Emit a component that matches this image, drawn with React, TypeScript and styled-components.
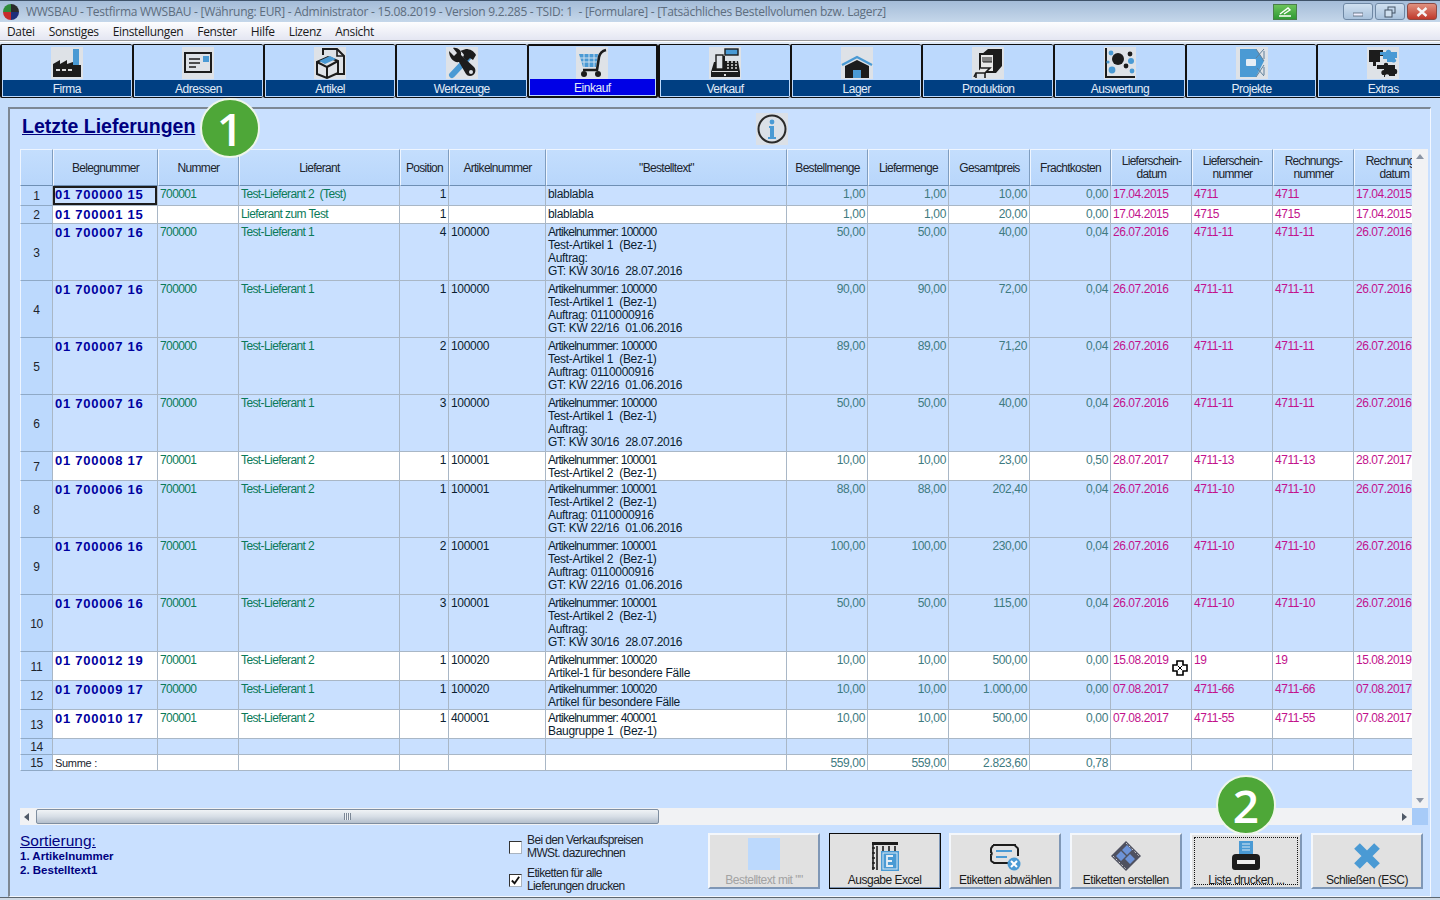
import React from "react";
import styled, { createGlobalStyle } from "styled-components";

const GlobalStyle = createGlobalStyle`
  html, body { margin: 0; padding: 0; background: #c5ddfb; }
  body { font-family: "Liberation Sans", Arial, sans-serif; }
`;

/* ---------- data ---------- */

interface Row {
  beleg: string;
  nummer: string;
  lieferant: string;
  position: string;
  artikel: string;
  text: string[];
  menge: string;
  liefer: string;
  preis: string;
  fracht: string;
  datum: string;
  schein: string;
  rechnung: string;
  rdatum: string;
  height: number;
  white?: boolean;
}

const TL1 = "Test-Lieferant 1";
const TL2 = "Test-Lieferant 2";
const art = (n: string, name: string, auftrag: string, gt: string) => [
  `Artikelnummer: ${n}`,
  name,
  `Auftrag:${auftrag ? " " + auftrag : ""}`,
  `GT: KW ${gt}`,
];

const ROWS: Row[] = [
  { beleg: "01 700000 15", nummer: "700001", lieferant: "Test-Lieferant 2  (Test)", position: "1", artikel: "", text: ["blablabla"], menge: "1,00", liefer: "1,00", preis: "10,00", fracht: "0,00", datum: "17.04.2015", schein: "4711", rechnung: "4711", rdatum: "17.04.2015", height: 20 },
  { beleg: "01 700001 15", nummer: "", lieferant: "Lieferant zum Test", position: "1", artikel: "", text: ["blablabla"], menge: "1,00", liefer: "1,00", preis: "20,00", fracht: "0,00", datum: "17.04.2015", schein: "4715", rechnung: "4715", rdatum: "17.04.2015", height: 18, white: true },
  { beleg: "01 700007 16", nummer: "700000", lieferant: TL1, position: "4", artikel: "100000", text: art("100000", "Test-Artikel 1  (Bez-1)", "", "30/16  28.07.2016"), menge: "50,00", liefer: "50,00", preis: "40,00", fracht: "0,04", datum: "26.07.2016", schein: "4711-11", rechnung: "4711-11", rdatum: "26.07.2016", height: 57 },
  { beleg: "01 700007 16", nummer: "700000", lieferant: TL1, position: "1", artikel: "100000", text: art("100000", "Test-Artikel 1  (Bez-1)", "0110000916", "22/16  01.06.2016"), menge: "90,00", liefer: "90,00", preis: "72,00", fracht: "0,04", datum: "26.07.2016", schein: "4711-11", rechnung: "4711-11", rdatum: "26.07.2016", height: 57 },
  { beleg: "01 700007 16", nummer: "700000", lieferant: TL1, position: "2", artikel: "100000", text: art("100000", "Test-Artikel 1  (Bez-1)", "0110000916", "22/16  01.06.2016"), menge: "89,00", liefer: "89,00", preis: "71,20", fracht: "0,04", datum: "26.07.2016", schein: "4711-11", rechnung: "4711-11", rdatum: "26.07.2016", height: 57 },
  { beleg: "01 700007 16", nummer: "700000", lieferant: TL1, position: "3", artikel: "100000", text: art("100000", "Test-Artikel 1  (Bez-1)", "", "30/16  28.07.2016"), menge: "50,00", liefer: "50,00", preis: "40,00", fracht: "0,04", datum: "26.07.2016", schein: "4711-11", rechnung: "4711-11", rdatum: "26.07.2016", height: 57 },
  { beleg: "01 700008 17", nummer: "700001", lieferant: TL2, position: "1", artikel: "100001", text: ["Artikelnummer: 100001", "Test-Artikel 2  (Bez-1)"], menge: "10,00", liefer: "10,00", preis: "23,00", fracht: "0,50", datum: "28.07.2017", schein: "4711-13", rechnung: "4711-13", rdatum: "28.07.2017", height: 29, white: true },
  { beleg: "01 700006 16", nummer: "700001", lieferant: TL2, position: "1", artikel: "100001", text: art("100001", "Test-Artikel 2  (Bez-1)", "0110000916", "22/16  01.06.2016"), menge: "88,00", liefer: "88,00", preis: "202,40", fracht: "0,04", datum: "26.07.2016", schein: "4711-10", rechnung: "4711-10", rdatum: "26.07.2016", height: 57 },
  { beleg: "01 700006 16", nummer: "700001", lieferant: TL2, position: "2", artikel: "100001", text: art("100001", "Test-Artikel 2  (Bez-1)", "0110000916", "22/16  01.06.2016"), menge: "100,00", liefer: "100,00", preis: "230,00", fracht: "0,04", datum: "26.07.2016", schein: "4711-10", rechnung: "4711-10", rdatum: "26.07.2016", height: 57 },
  { beleg: "01 700006 16", nummer: "700001", lieferant: TL2, position: "3", artikel: "100001", text: art("100001", "Test-Artikel 2  (Bez-1)", "", "30/16  28.07.2016"), menge: "50,00", liefer: "50,00", preis: "115,00", fracht: "0,04", datum: "26.07.2016", schein: "4711-10", rechnung: "4711-10", rdatum: "26.07.2016", height: 57 },
  { beleg: "01 700012 19", nummer: "700001", lieferant: TL2, position: "1", artikel: "100020", text: ["Artikelnummer: 100020", "Artikel-1 für besondere Fälle"], menge: "10,00", liefer: "10,00", preis: "500,00", fracht: "0,00", datum: "15.08.2019", schein: "19", rechnung: "19", rdatum: "15.08.2019", height: 29, white: true },
  { beleg: "01 700009 17", nummer: "700000", lieferant: TL1, position: "1", artikel: "100020", text: ["Artikelnummer: 100020", "Artikel für besondere Fälle"], menge: "10,00", liefer: "10,00", preis: "1.000,00", fracht: "0,00", datum: "07.08.2017", schein: "4711-66", rechnung: "4711-66", rdatum: "07.08.2017", height: 29 },
  { beleg: "01 700010 17", nummer: "700001", lieferant: TL2, position: "1", artikel: "400001", text: ["Artikelnummer: 400001", "Baugruppe 1  (Bez-1)"], menge: "10,00", liefer: "10,00", preis: "500,00", fracht: "0,00", datum: "07.08.2017", schein: "4711-55", rechnung: "4711-55", rdatum: "07.08.2017", height: 29, white: true },
];

const COLUMNS = [33, 105, 81, 161, 49, 97, 241, 81, 81, 81, 81, 81, 81, 81, 81];
const HEADERS = ["", "Belegnummer", "Nummer", "Lieferant", "Position", "Artikelnummer", "\"Bestelltext\"", "Bestellmenge", "Liefermenge", "Gesamtpreis", "Frachtkosten", "Lieferschein-\ndatum", "Lieferschein-\nnummer", "Rechnungs-\nnummer", "Rechnungs-\ndatum"];

/* ---------- icons ---------- */

const BLUE = "#4a9ad4";
const INK = "#1c1c1c";

const FactoryIcon = () => (
  <svg viewBox="0 0 32 32" width="32" height="32">
    <rect x="22" y="2" width="6" height="20" fill={BLUE} />
    <path d="M2 30V17l7-4v4l7-4v4l6-2v3h8v12z" fill={INK} />
    <path d="M5 23h4M11 23h4M17 23h4" stroke="#ddd" strokeWidth="2" />
  </svg>
);
const AddressIcon = () => (
  <svg viewBox="0 0 32 32" width="32" height="32">
    <rect x="3" y="6" width="26" height="19" fill="none" stroke={INK} strokeWidth="2" />
    <rect x="21" y="9" width="6" height="6" fill={BLUE} />
    <path d="M7 12h11M7 16h11M7 20h7" stroke={INK} strokeWidth="1.6" />
  </svg>
);
const ArticleIcon = () => (
  <svg viewBox="0 0 32 32" width="32" height="32">
    <path d="M9 8V2h14l7 7v18H18" fill="none" stroke={INK} strokeWidth="2" />
    <path d="M23 2v7h7" fill="none" stroke={INK} strokeWidth="1.6" />
    <path d="M3 15l11-5 10 4v12l-11 5-10-4z" fill="#dfe3e8" stroke={INK} strokeWidth="2" />
    <path d="M5 14l11-5 6 3-11 5z" fill={BLUE} />
    <path d="M3 15l10 5v11M13 20l11-6" fill="none" stroke={INK} strokeWidth="2" />
  </svg>
);
const ToolsIcon = () => (
  <svg viewBox="0 0 32 32" width="32" height="32">
    <path d="M6 28L22 11" stroke={BLUE} strokeWidth="6" strokeLinecap="round" />
    <path d="M14 4l6-2c4 0 8 2 10 6l-3 5-3-2-3 3-4-4 1-2c-1-2-2-3-4-4z" fill={INK} />
    <path d="M3 4l5 5 3-3-4-5c4-1 9 2 8 7l13 12c3 3 1 9-4 9-2 0-3-1-4-2L13 15c-5 1-10-4-10-11z" fill={INK} />
    <circle cx="25" cy="25" r="2" fill="#dfe3e8" />
  </svg>
);
const CartIcon = () => (
  <svg viewBox="0 0 32 32" width="32" height="32">
    <path d="M3 7h19l-2 13H7z" fill={BLUE} />
    <path d="M3 11h19M3 15h18M8 7v13M13 7v13M18 7v13" stroke="#cfe0ee" strokeWidth="1" />
    <path d="M30 3c-4 1-6 3-7 7l-2 13H7" fill="none" stroke={INK} strokeWidth="2.6" />
    <circle cx="8" cy="27" r="3" fill={INK} />
    <circle cx="22" cy="27" r="3" fill={INK} />
  </svg>
);
const RegisterIcon = () => (
  <svg viewBox="0 0 32 32" width="32" height="32">
    <rect x="16" y="2" width="13" height="6" fill={BLUE} stroke={INK} strokeWidth="1.4" />
    <path d="M2 30v-5l3-10h6V9h5v5h13l2 11v5z" fill={INK} />
    <rect x="7" y="8" width="7" height="14" fill="#dfe3e8" stroke={INK} strokeWidth="1.4" />
    <path d="M18 15h2M22 15h2M26 15h2M18 18h2M22 18h2M26 18h2M18 21h2M22 21h2M26 21h2" stroke="#ddd" strokeWidth="1.6" />
    <rect x="3" y="24" width="26" height="1" fill="#ddd" />
    <rect x="15" y="27" width="2" height="2" fill="#ddd" />
  </svg>
);
const HouseIcon = () => (
  <svg viewBox="0 0 32 32" width="32" height="32">
    <path d="M1 18L16 10l15 8" fill="none" stroke={BLUE} strokeWidth="2.4" />
    <path d="M4 31V19L16 13l12 6v12z" fill={INK} />
    <rect x="12" y="23" width="8" height="8" fill={BLUE} />
  </svg>
);
const ProductionIcon = () => (
  <svg viewBox="0 0 32 32" width="32" height="32">
    <path d="M10 7l6-5h14v17l-6 7h-3V7z" fill={INK} />
    <path d="M8 7h14v18H8z" fill="#e8e8e8" stroke={INK} strokeWidth="2" />
    <path d="M11 10v5M13 10v5M15 10v5M17 10v5M19 10v5M11 15h9" stroke={INK} strokeWidth="1" />
    <path d="M9 21h9l-5 5H4l-2 4" fill="#e8e8e8" stroke={INK} strokeWidth="1.6" />
    <path d="M4 26v5M13 26v5" stroke={INK} strokeWidth="1.6" />
  </svg>
);
const ChartIcon = () => (
  <svg viewBox="0 0 32 32" width="32" height="32">
    <path d="M2 1v29h29" fill="none" stroke={INK} strokeWidth="2" />
    <circle cx="14" cy="12" r="6" fill={INK} />
    <circle cx="7" cy="6" r="2.4" fill={BLUE} />
    <circle cx="26" cy="7" r="2.4" fill={INK} />
    <circle cx="22" cy="19" r="2.4" fill={INK} />
    <circle cx="27" cy="14" r="3" fill={BLUE} />
    <circle cx="8" cy="23" r="3.4" fill={BLUE} />
    <circle cx="28" cy="24" r="2.4" fill={BLUE} />
    <circle cx="4" cy="15" r="1.6" fill={BLUE} />
  </svg>
);
const ProjectIcon = () => (
  <svg viewBox="0 0 32 32" width="32" height="32">
    <path d="M4 2h16l8 12-8 16H4z" fill={BLUE} />
    <rect x="10" y="12" width="10" height="7" rx="1" fill="#e6eef5" />
    <path d="M20 2l8 12M28 2l-8 9M28 4v8M20 30l8-12M28 29l-7-8M28 20v8" fill="none" stroke="#5f7f99" strokeWidth="1" />
  </svg>
);
const PuzzleIcon = () => (
  <svg viewBox="0 0 32 32" width="32" height="32">
    <path d="M2 3h14v6h-3v6H9v4H6v-4H2z" fill={INK} />
    <path d="M13 5h6c0-3 5-3 5 0h6v6h-2v1c3 1 0 5-3 3h-5v-3h-4V8h-3z" fill={BLUE} />
    <path d="M10 18h7c-1-3 5-3 4 0h7v4c3-1 3 6 0 5v2h-6c1-2-5-3-4 1h-1v-2c-3 1-4-5 0-5v-1h-7z" fill={INK} />
  </svg>
);
const InfoIcon = () => (
  <svg viewBox="0 0 32 32" width="32" height="32">
    <circle cx="16" cy="16" r="13.5" fill="none" stroke="#2a2a2a" strokeWidth="2" />
    <circle cx="16" cy="9" r="2.4" fill={BLUE} />
    <path d="M13 13h5v11h2v2h-8v-2h2v-9h-1z" fill={BLUE} />
  </svg>
);
const ExcelIcon = () => (
  <svg viewBox="0 0 32 32" width="32" height="32">
    <path d="M3 2h26v3H3z" fill={INK} />
    <path d="M3 8h3M3 13h3M3 18h3M3 23h3M3 28h3M8 6v24M14 6v5M20 6v5M26 6v5M4 5v25" stroke={INK} strokeWidth="1.6" />
    <rect x="12" y="11" width="18" height="20" fill={BLUE} />
    <rect x="14" y="13" width="14" height="16" fill="none" stroke="#d8e8f4" strokeWidth="1" />
    <path d="M24 16h-6v10h6M18 21h5" fill="none" stroke="#e6eef5" strokeWidth="1.8" />
  </svg>
);
const DeselectIcon = () => (
  <svg viewBox="0 0 32 32" width="32" height="32">
    <path d="M4 5h22c0 2 3 2 3 4v7M4 5c0 2-2 2-2 4v3c1 0 1 3 0 3v5c0 2 2 2 3 3h15" fill="none" stroke={INK} strokeWidth="2" />
    <path d="M7 11h16" stroke={BLUE} strokeWidth="2" />
    <path d="M7 17h11" stroke={BLUE} strokeWidth="2" />
    <circle cx="25" cy="24" r="6.5" fill={BLUE} />
    <path d="M22 21l6 6M28 21l-6 6" stroke="#fff" strokeWidth="2" />
  </svg>
);
const FilmIcon = () => (
  <svg viewBox="0 0 32 32" width="32" height="32">
    <path d="M16 1l15 15-15 15L1 16z" fill="#4f5160" />
    <path d="M12 10l5-5 5 5-5 5zM6 16l5-5 5 5-5 5zM15 19l5-5 5 5-5 5z" fill="#6d93d8" />
    <path d="M16 3l13 13M3 16l13 13" stroke="#ccc" strokeWidth="1" strokeDasharray="2 2" />
  </svg>
);
const PrinterIcon = () => (
  <svg viewBox="0 0 32 32" width="32" height="32">
    <rect x="9" y="1" width="14" height="13" fill={BLUE} />
    <path d="M12 4h8M12 7h8M12 10h8" stroke="#d8e8f4" strokeWidth="1" />
    <path d="M6 14h20a4 4 0 0 1 4 4v9a3 3 0 0 1-3 3H5a3 3 0 0 1-3-3v-9a4 4 0 0 1 4-4z" fill={INK} />
    <rect x="7" y="20" width="18" height="4" fill="#eee" />
  </svg>
);
const CloseIcon = () => (
  <svg viewBox="0 0 32 32" width="32" height="32">
    <path d="M6 6L26 26M26 6L6 26" stroke={BLUE} strokeWidth="8" />
  </svg>
);

const TOOLS = [
  { label: "Firma", icon: <FactoryIcon /> },
  { label: "Adressen", icon: <AddressIcon /> },
  { label: "Artikel", icon: <ArticleIcon /> },
  { label: "Werkzeuge", icon: <ToolsIcon /> },
  { label: "Einkauf", icon: <CartIcon />, active: true },
  { label: "Verkauf", icon: <RegisterIcon /> },
  { label: "Lager", icon: <HouseIcon /> },
  { label: "Produktion", icon: <ProductionIcon /> },
  { label: "Auswertung", icon: <ChartIcon /> },
  { label: "Projekte", icon: <ProjectIcon /> },
  { label: "Extras", icon: <PuzzleIcon /> },
];

const MENU = ["Datei", "Sonstiges", "Einstellungen", "Fenster", "Hilfe", "Lizenz", "Ansicht"];

/* ---------- page ---------- */

export default function App() {
  return (
    <Screen>
      <GlobalStyle />
      <TitleBar>
        <AppLogo viewBox="0 0 16 16">
          <path d="M8 0a8 8 0 0 1 8 8H8z" fill="#2b2b2b" />
          <path d="M8 0a8 8 0 0 0-8 8h8z" fill="#2e8b3a" />
          <path d="M0 8a8 8 0 0 0 8 8V8z" fill="#c62b2b" />
          <path d="M16 8a8 8 0 0 1-8 8V8z" fill="#1d2f7a" />
        </AppLogo>
        <TitleText>WWSBAU - Testfirma WWSBAU - [Währung: EUR] - Administrator - 15.08.2019 - Version 9.2.285 - TSID: 1  - [Formulare] - [Tatsächliches Bestellvolumen bzw. Lagerz]</TitleText>
        <GreenButton>
          <svg viewBox="0 0 16 12" width="16" height="12">
            <path d="M2 10h12M3 8l8-6 2 2-6 4" fill="none" stroke="#fff" strokeWidth="1.4" />
          </svg>
        </GreenButton>
        <CaptionButton>
          <svg viewBox="0 0 10 10" width="10" height="10"><rect x="0" y="6" width="10" height="3" fill="#eef" stroke="#567" strokeWidth="0.8" /></svg>
        </CaptionButton>
        <CaptionButton>
          <svg viewBox="0 0 12 12" width="12" height="12">
            <rect x="4" y="1" width="7" height="6" fill="none" stroke="#456" />
            <rect x="1" y="4" width="7" height="7" fill="#cfdfee" stroke="#456" />
          </svg>
        </CaptionButton>
        <CaptionButton $close>
          <svg viewBox="0 0 12 10" width="12" height="10"><path d="M1.5 1l9 8M10.5 1l-9 8" stroke="#f6f6f6" strokeWidth="2.4" /></svg>
        </CaptionButton>
      </TitleBar>
      <MenuBar>
        {MENU.map(item => <MenuItem key={item}>{item}</MenuItem>)}
      </MenuBar>
      <ToolBar>
        {TOOLS.map(tool => (
          <ToolButton key={tool.label} $active={tool.active}>
            <ToolIcon>{tool.icon}</ToolIcon>
            <ToolLabel $active={tool.active}>{tool.label}</ToolLabel>
          </ToolButton>
        ))}
      </ToolBar>
      <Panel>
        <PanelHeader>
          <PageTitle>Letzte Lieferungen</PageTitle>
          <InfoTile><InfoIcon /></InfoTile>
        </PanelHeader>
        <TableArea>
          <TableViewport>
            <Grid>
              <colgroup>
                {COLUMNS.map((w, i) => <col key={i} width={w} />)}
              </colgroup>
              <thead>
                <tr>
                  {HEADERS.map((h, i) => <HeadCell key={i}>{h}</HeadCell>)}
                </tr>
              </thead>
              <tbody>
                {ROWS.map((row, i) => (
                  <DataRow key={i} $height={row.height} $white={row.white}>
                    <RowNumber>{i + 1}</RowNumber>
                    <BelegCell $selected={i === 0}>{row.beleg}</BelegCell>
                    <GreenCell>{row.nummer}</GreenCell>
                    <GreenCell>{row.lieferant}</GreenCell>
                    <DarkCell $right>{row.position}</DarkCell>
                    <DarkCell>{row.artikel}</DarkCell>
                    <DarkCell>
                      {row.text.map((line, j) => <TextLine key={j} $tight={line.startsWith("Artikelnummer")}>{line}</TextLine>)}
                    </DarkCell>
                    <NumberCell>{row.menge}</NumberCell>
                    <NumberCell>{row.liefer}</NumberCell>
                    <NumberCell>{row.preis}</NumberCell>
                    <NumberCell>{row.fracht}</NumberCell>
                    <PinkCell>{row.datum}</PinkCell>
                    <PinkCell>{row.schein}</PinkCell>
                    <PinkCell>{row.rechnung}</PinkCell>
                    <PinkCell>{row.rdatum}</PinkCell>
                  </DataRow>
                ))}
                <DataRow $height={16}>
                  <RowNumber>14</RowNumber>
                  {COLUMNS.slice(1).map((_, i) => <DarkCell key={i} />)}
                </DataRow>
                <DataRow $height={16} $white>
                  <RowNumber>15</RowNumber>
                  <SumLabel>Summe :</SumLabel>
                  <DarkCell /><DarkCell /><DarkCell /><DarkCell /><DarkCell />
                  <NumberCell>559,00</NumberCell>
                  <NumberCell>559,00</NumberCell>
                  <NumberCell>2.823,60</NumberCell>
                  <NumberCell>0,78</NumberCell>
                  <DarkCell /><DarkCell /><DarkCell /><DarkCell />
                </DataRow>
              </tbody>
            </Grid>
          </TableViewport>
          <VScroll>
            <ArrowUp />
            <ArrowDown />
          </VScroll>
          <HScroll>
            <ArrowLeft />
            <HThumb><Grip /></HThumb>
            <ArrowRight />
          </HScroll>
          <Corner />
        </TableArea>
        <Footer>
          <SortInfo>
            <SortTitle>Sortierung:</SortTitle>
            <SortLine>1. Artikelnummer</SortLine>
            <SortLine>2. Bestelltext1</SortLine>
          </SortInfo>
          <Options>
            <Option>
              <CheckBox />
              <OptionText>Bei den Verkaufspreisen<br />MWSt. dazurechnen</OptionText>
            </Option>
            <Option>
              <CheckBox>
                <svg viewBox="0 0 12 12" width="11" height="11"><path d="M2 6l3 3 5-7" fill="none" stroke="#111" strokeWidth="2" /></svg>
              </CheckBox>
              <OptionText>Etiketten für alle<br />Lieferungen drucken</OptionText>
            </Option>
          </Options>
          <Actions>
            <ActionButton $disabled>
              <BlankGlyph />
              <ActionLabel $disabled>Bestelltext mit ""</ActionLabel>
            </ActionButton>
            <ActionButton $default>
              <ActionIcon><ExcelIcon /></ActionIcon>
              <ActionLabel>Ausgabe Excel</ActionLabel>
            </ActionButton>
            <ActionButton>
              <ActionIcon><DeselectIcon /></ActionIcon>
              <ActionLabel>Etiketten abwählen</ActionLabel>
            </ActionButton>
            <ActionButton>
              <ActionIcon><FilmIcon /></ActionIcon>
              <ActionLabel>Etiketten erstellen</ActionLabel>
            </ActionButton>
            <ActionButton $focused>
              <ActionIcon><PrinterIcon /></ActionIcon>
              <ActionLabel>Liste drucken ...</ActionLabel>
            </ActionButton>
            <ActionButton>
              <ActionIcon><CloseIcon /></ActionIcon>
              <ActionLabel>Schließen (ESC)</ActionLabel>
            </ActionButton>
          </Actions>
        </Footer>
      </Panel>
      <StatusEdge />
      <Badge $x={200} $y={98}>1</Badge>
      <Badge $x={1216} $y={775}>2</Badge>
      <Cursor viewBox="0 0 16 16">
        <path d="M5 1h6v4h4v6h-4v4H5v-4H1V5h4z" fill="#fff" stroke="#000" strokeWidth="1.6" />
        <path d="M6 6l4 4M10 6l-4 4" stroke="#000" strokeWidth="1" />
      </Cursor>
    </Screen>
  );
}

/* ---------- styles ---------- */

const Screen = styled.div`
  position: relative;
  width: 1440px;
  height: 900px;
  overflow: hidden;
  display: flex;
  flex-direction: column;
  background: #c5ddfb;
`;

const TitleBar = styled.div`
  height: 22px;
  box-sizing: border-box;
  display: flex;
  align-items: center;
  padding: 0 3px 0 3px;
  border-top: 1px solid #3f5268;
  background: linear-gradient(#a4bcd8, #c5d7ea);
`;

const AppLogo = styled.svg`
  width: 16px;
  height: 16px;
  margin-right: 7px;
`;

const TitleText = styled.div`
  flex: 1;
  font: 12px "Open Sans", "Noto Sans", sans-serif;
  letter-spacing: -0.27px;
  color: #5d6d7e;
  white-space: pre;
`;

const GreenButton = styled.div`
  width: 24px;
  height: 16px;
  margin-right: 44px;
  display: flex;
  align-items: center;
  justify-content: center;
  background: linear-gradient(#6cc35a, #2f9a34);
  border: 1px solid #4a7f48;
  box-sizing: border-box;
`;

const CaptionButton = styled.div<{ $close?: boolean }>`
  width: 30px;
  height: 17px;
  margin-left: 2px;
  box-sizing: border-box;
  display: flex;
  align-items: center;
  justify-content: center;
  border: 1px solid ${p => (p.$close ? "#8c4a44" : "#6f88a4")};
  border-radius: 3px;
  background: ${p => (p.$close ? "linear-gradient(#e0917f, #c0392b)" : "linear-gradient(#d0e0f0, #a9c2dc)")};
`;

const MenuBar = styled.div`
  height: 19px;
  display: flex;
  align-items: center;
  gap: 14px;
  padding-left: 7px;
  background: linear-gradient(#fdfdfe, #e4e6f2);
  border-bottom: 1px solid #9a9a9a;
  box-sizing: border-box;
`;

const MenuItem = styled.span`
  font: 12px "Open Sans", "Noto Sans", sans-serif;
  letter-spacing: -0.35px;
  color: #1a1a1a;
`;

const ToolBar = styled.div`
  height: 57px;
  display: grid;
  grid-template-columns: repeat(11, 131.65px);
  padding: 2px 0 0 0;
  box-sizing: border-box;
  background: #dfe9f6;
  border-top: 1px solid #fff;
`;

const ToolButton = styled.div<{ $active?: boolean }>`
  height: 54px;
  box-sizing: border-box;
  display: flex;
  flex-direction: column;
  background: #bcd9fd;
  border-style: solid;
  border-color: #111;
  border-width: ${p => (p.$active ? "2px 2px 2px 2px" : "1px 0 1px 2px")};
  border-radius: 2px;
  padding: 0 1px 1px 1px;
`;

const ToolIcon = styled.div`
  flex: 1;
  display: flex;
  align-items: center;
  justify-content: center;
  padding-top: 1px;
  svg {
    background: #dee2e7;
  }
`;

const ToolLabel = styled.div<{ $active?: boolean }>`
  height: 16px;
  text-align: center;
  font-size: 12px;
  line-height: 18px;
  letter-spacing: -0.5px;
  overflow: hidden;
  color: #e2ecf8;
  background: ${p => (p.$active ? "#0000e6" : "#003f82")};
`;

const Panel = styled.div`
  margin: 9px 9px 0 8px;
  flex: 1;
  min-height: 0;
  box-sizing: border-box;
  padding: 0 2px 0 10px;
  display: flex;
  flex-direction: column;
  background: #c9e0ff;
  border-style: solid;
  border-width: 2px 1px 1px 2px;
  border-color: #7d8894 #f2f7ff #f4f8ff #7d8894;
`;

const StatusEdge = styled.div`
  height: 3px;
  box-sizing: border-box;
  background: #d0d9e4;
  border-top: 1px solid #5d6770;
`;

const PanelHeader = styled.div`
  height: 40px;
  display: flex;
  align-items: center;
`;

const PageTitle = styled.h1`
  margin: 0 0 6px 2px;
  font-size: 19.5px;
  font-weight: bold;
  color: #00007f;
  text-decoration: underline;
  white-space: nowrap;
`;

const InfoTile = styled.div`
  margin-left: 561px;
  width: 32px;
  height: 32px;
  background: #dbe0e7;
  flex: none;
`;

const TableArea = styled.div`
  display: grid;
  grid-template-columns: 1392px 16px;
  grid-template-rows: 659px 17px;
`;

const TableViewport = styled.div`
  overflow: hidden;
  background: #c9e0ff;
`;

const Grid = styled.table`
  table-layout: fixed;
  width: 1415px;
  border-collapse: separate;
  border-spacing: 0;
  font-size: 12px;
  letter-spacing: -0.3px;
`;

const HeadCell = styled.th`
  height: 37px;
  box-sizing: border-box;
  padding: 1px 1px 0;
  font-weight: normal;
  font-size: 12px;
  line-height: 13px;
  letter-spacing: -0.7px;
  color: #20242c;
  white-space: pre;
  overflow: hidden;
  text-align: center;
  background: linear-gradient(#c4defd, #b8d6fb);
  border-top: 1px solid #eef5ff;
  border-left: 1px solid #eef5ff;
  border-right: 1px solid #7f9dbf;
  border-bottom: 1px solid #6e8fb4;
`;

const DataRow = styled.tr<{ $height: number; $white?: boolean }>`
  height: ${p => p.$height}px;
  background: ${p => (p.$white ? "#ffffff" : "#c9e0ff")};
`;

const Cell = styled.td`
  box-sizing: border-box;
  padding: 2px 2px 0 2px;
  vertical-align: top;
  line-height: 13px;
  white-space: pre;
  overflow: hidden;
  border-right: 1px solid #a9b7c6;
  border-bottom: 1px solid #a9b7c6;
`;

const RowNumber = styled(Cell)`
  text-align: center;
  vertical-align: middle;
  color: #20242c;
  background: #bcd9fd;
  border-left: 1px solid #eef5ff;
  border-bottom-color: #8fa9c6;
`;

const BelegCell = styled(Cell)<{ $selected?: boolean }>`
  font-weight: bold;
  font-size: 13px;
  letter-spacing: 0.75px;
  color: #0000a0;
  line-height: 16px;
  padding-top: 1px;
  ${p => p.$selected && "box-shadow: inset 0 0 0 2px #1c1c1c;"}
`;

const GreenCell = styled(Cell)`
  color: #0a7a58;
  letter-spacing: -0.6px;
`;

const DarkCell = styled(Cell)<{ $right?: boolean }>`
  color: #0b1e30;
  text-align: ${p => (p.$right ? "right" : "left")};
`;

const TextLine = styled.div<{ $tight?: boolean }>`
  letter-spacing: ${p => (p.$tight ? "-0.75px" : "-0.3px")};
`;

const NumberCell = styled(Cell)`
  text-align: right;
  color: #3e7a80;
  letter-spacing: -0.35px;
`;

const PinkCell = styled(Cell)`
  color: #c2128c;
  letter-spacing: -0.45px;
`;

const SumLabel = styled(Cell)`
  color: #20242c;
  font-size: 11px;
`;

const VScroll = styled.div`
  position: relative;
  background: #f1f2f4;
  display: flex;
  flex-direction: column;
  justify-content: space-between;
  align-items: center;
  padding: 5px 0;
  box-sizing: border-box;
`;

const ArrowUp = styled.div`
  border: 4px solid transparent;
  border-top: 0;
  border-bottom: 5px solid #8b95a5;
`;

const ArrowDown = styled.div`
  border: 4px solid transparent;
  border-bottom: 0;
  border-top: 5px solid #8b95a5;
`;

const HScroll = styled.div`
  background: #f1f2f4;
  display: flex;
  align-items: center;
  padding: 0 5px 0 4px;
  box-sizing: border-box;
`;

const ArrowLeft = styled.div`
  border: 4px solid transparent;
  border-left: 0;
  border-right: 5px solid #505a68;
  margin-right: 7px;
`;

const ArrowRight = styled.div`
  border: 4px solid transparent;
  border-right: 0;
  border-left: 5px solid #505a68;
  margin-left: auto;
`;

const HThumb = styled.div`
  width: 623px;
  height: 15px;
  box-sizing: border-box;
  display: flex;
  align-items: center;
  justify-content: center;
  border: 1px solid #7f8ea0;
  border-radius: 2px;
  background: linear-gradient(#f0f3f6, #d7dee6 50%, #b4bfcc);
`;

const Grip = styled.div`
  width: 7px;
  height: 7px;
  background: repeating-linear-gradient(90deg, #7b8796 0 1px, #eef1f5 1px 2px);
`;

const Corner = styled.div`
  background: #a7cbf8;
`;

const Footer = styled.div`
  flex: 1;
  display: flex;
  align-items: flex-start;
  min-height: 0;
`;

const SortInfo = styled.div`
  width: 489px;
  padding-top: 7px;
`;

const SortTitle = styled.div`
  font-size: 15.5px;
  line-height: 18px;
  color: #00007f;
  text-decoration: underline;
  font-weight: 500;
`;

const SortLine = styled.div`
  font-size: 11.5px;
  line-height: 13.5px;
  font-weight: bold;
  color: #00007f;
`;

const Options = styled.div`
  width: 199px;
  padding-top: 9px;
  display: flex;
  flex-direction: column;
  gap: 7px;
`;

const Option = styled.div`
  display: flex;
  align-items: center;
  gap: 5px;
`;

const CheckBox = styled.div`
  width: 11px;
  height: 11px;
  flex: none;
  display: flex;
  background: #fff;
  border: 1px solid;
  border-color: #333 #aab4c0 #aab4c0 #333;
  box-sizing: content-box;
`;

const OptionText = styled.div`
  font-size: 12px;
  line-height: 13px;
  letter-spacing: -0.62px;
  color: #20242c;
`;

const Actions = styled.div`
  display: flex;
  gap: 8.6px;
  padding-top: 8px;
`;

const ActionButton = styled.div<{ $disabled?: boolean; $default?: boolean; $focused?: boolean }>`
  position: relative;
  width: 112px;
  height: 56px;
  flex: none;
  box-sizing: border-box;
  display: flex;
  flex-direction: column;
  align-items: center;
  background: #e1e1e1;
  border-style: solid;
  border-width: 2px;
  border-color: #f4f7fb #7f97b6 #7f97b6 #f4f7fb;
  ${p => p.$default && "border-color: #0c0c0c; box-shadow: inset -1px -1px 0 #7f97b6; border-width: 1px; padding: 1px 1px 1px 1px;"}
  ${p => p.$focused && `&::after {
    content: "";
    position: absolute;
    inset: 2px;
    border: 1px dotted #111;
  }`}
`;

const ActionIcon = styled.div`
  height: 36px;
  display: flex;
  align-items: center;
  justify-content: center;
  padding-top: 3px;
`;

const BlankGlyph = styled.div`
  width: 32px;
  height: 32px;
  margin: 3px 0 0;
  background: #bcd9fd;
`;

const ActionLabel = styled.div<{ $disabled?: boolean }>`
  font-size: 12px;
  line-height: 14px;
  margin-top: auto;
  margin-bottom: 0;
  letter-spacing: -0.5px;
  color: ${p => (p.$disabled ? "#a3a3a3" : "#1b1b1b")};
`;

const Badge = styled.div<{ $x: number; $y: number }>`
  position: absolute;
  left: ${p => p.$x}px;
  top: ${p => p.$y}px;
  width: 60px;
  height: 60px;
  box-sizing: border-box;
  display: flex;
  align-items: center;
  justify-content: center;
  border-radius: 50%;
  border: 2px solid #eef6ea;
  background: #4ea738;
  color: #fff;
  font: 600 46px "Open Sans", sans-serif;
`;

const Cursor = styled.svg`
  position: absolute;
  left: 1172px;
  top: 660px;
  width: 16px;
  height: 16px;
`;
